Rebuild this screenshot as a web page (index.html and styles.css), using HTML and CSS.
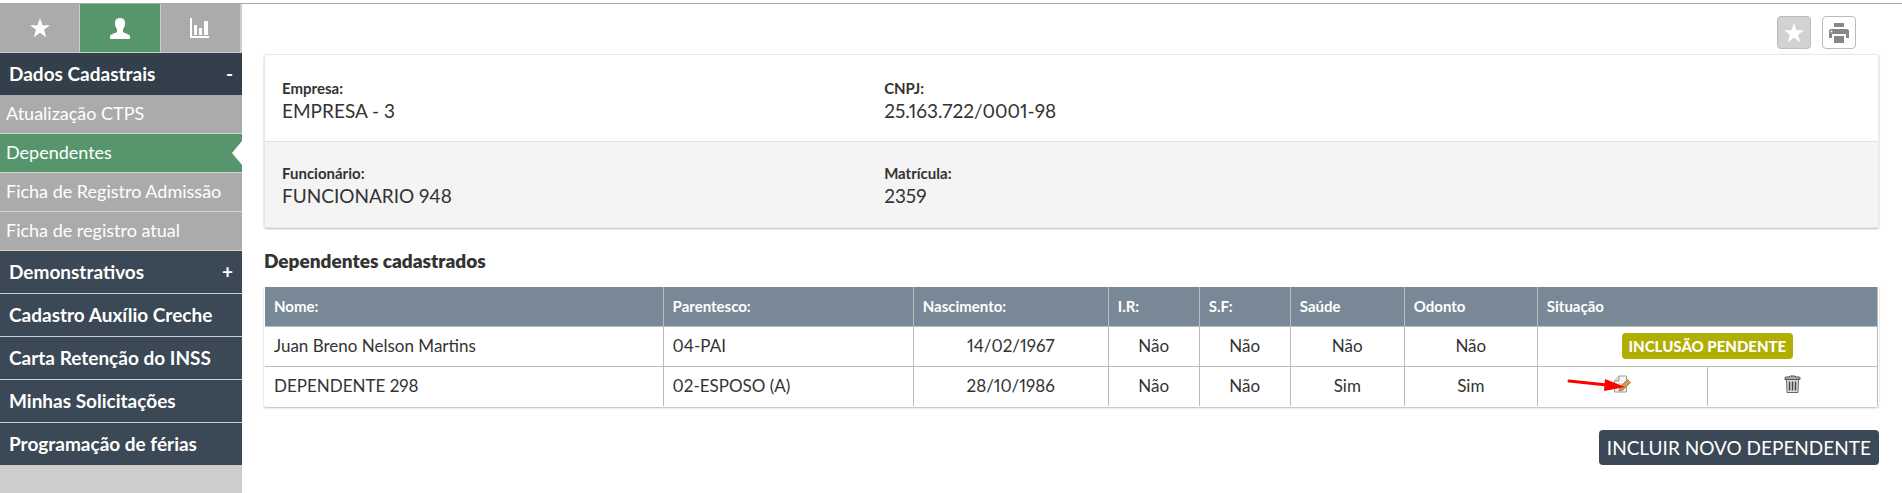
FILE: index.html
```html
<!DOCTYPE html>
<html lang="pt-BR">
<head>
<meta charset="utf-8">
<title>Dependentes</title>
<link rel="stylesheet" href="styles.css">
</head>
<body>
<div class="layout">
  <aside class="sidebar">
    <nav class="tabs" aria-label="Seções">
      <a class="tab" href="#" aria-label="Favoritos"><svg width="20" height="20" viewBox="0 0 20 20"><path fill="#fff" d="M10 0l2.500 7.200H20l-6 4.600 2.300 7.400L10 14.700l-6.300 4.500L6 11.800 0 7.200h7.500z"/></svg></a>
      <a class="tab tab-active" href="#" aria-label="Funcionário"><svg width="20" height="21" viewBox="0 0 20 21"><path fill="#fff" d="M5 5C5 1.500 7 0 10 0s5 1.500 5 5c0 3-1 4.500-2 6.500v2.300c0 1.200 7 2.200 7 4.700V21H0v-2.500c0-2.500 7-3.500 7-4.700v-2.300C6 9.500 5 8 5 5z"/></svg></a>
      <a class="tab" href="#" aria-label="Gráficos"><svg width="20" height="20" viewBox="0 0 20 20"><path fill="#fff" d="M0 0h2v18h17v2H0zM4 7h3v10H4zM9 10h3v7H9zM14 3h4v14h-4z"/></svg></a>
    </nav>
    <nav class="menu" aria-label="Menu">
      <a class="group group-open" href="#"><span>Dados Cadastrais</span><span>-</span></a>
      <a class="item" href="#">Atualização CTPS</a>
      <a class="item item-active" href="#">Dependentes</a>
      <a class="item" href="#">Ficha de Registro Admissão</a>
      <a class="item" href="#">Ficha de registro atual</a>
      <a class="group" href="#"><span>Demonstrativos</span><span>+</span></a>
      <a class="group" href="#">Cadastro Auxílio Creche</a>
      <a class="group" href="#">Carta Retenção do INSS</a>
      <a class="group" href="#">Minhas Solicitações</a>
      <a class="group" href="#">Programação de férias</a>
    </nav>
  </aside>
  <main class="content">
    <div class="toolbar">
      <button class="tool tool-star" type="button" aria-label="Favoritar"><svg width="20" height="20" viewBox="0 0 20 20"><path fill="#fff" d="M10 0l2.500 7.200H20l-6 4.600 2.300 7.400L10 14.700l-6.300 4.500L6 11.800 0 7.200h7.500z"/></svg></button>
      <button class="tool" type="button" aria-label="Imprimir"><svg width="20" height="20" viewBox="0 0 20 20"><path fill="#888" d="M5 0h10v4H5zM2 6h16q2 0 2 2v7h-3v-4H3v4H0V8q0-2 2-2zM5 13h10v7H5z"/><circle cx="2.500" cy="8.500" r="1" fill="#fff"/></svg></button>
    </div>
    <section class="panel">
      <dl class="info">
        <div><dt>Empresa:</dt><dd>EMPRESA - 3</dd></div>
        <div><dt>CNPJ:</dt><dd>25.163.722/0001-98</dd></div>
      </dl>
      <dl class="info info-alt">
        <div><dt>Funcionário:</dt><dd>FUNCIONARIO 948</dd></div>
        <div><dt>Matrícula:</dt><dd>2359</dd></div>
      </dl>
    </section>
    <h2 class="title">Dependentes cadastrados</h2>
    <div class="table-card">
      <table class="grid">
        <colgroup><col class="c-name"><col class="c-kin"><col class="c-birth"><col class="c-tax"><col class="c-tax"><col class="c-health"><col class="c-dental"><col class="c-action"><col class="c-action"></colgroup>
        <thead><tr><th>Nome:</th><th>Parentesco:</th><th>Nascimento:</th><th>I.R:</th><th>S.F:</th><th>Saúde</th><th>Odonto</th><th colspan="2">Situação</th></tr></thead>
        <tbody>
          <tr><td>Juan Breno Nelson Martins</td><td>04-PAI</td><td class="mid">14/02/1967</td><td class="mid">Não</td><td class="mid">Não</td><td class="mid">Não</td><td class="mid">Não</td><td class="mid" colspan="2"><span class="badge">INCLUSÃO PENDENTE</span></td></tr>
          <tr><td>DEPENDENTE 298</td><td>02-ESPOSO (A)</td><td class="mid">28/10/1986</td><td class="mid">Não</td><td class="mid">Não</td><td class="mid">Sim</td><td class="mid">Sim</td>
            <td class="mid"><button class="act" type="button" aria-label="Editar"><svg width="18" height="18" viewBox="0 0 18 18"><path fill="#f4f4f4" stroke="#999" d="M6 1h7.500v16H1.500V6z"/><path fill="#ddd" stroke="#999" d="M6 1v5H1.500"/><path stroke="#ccc" d="M4 9h6M4 12h4"/><path fill="#dc9a45" stroke="#8d7150" stroke-width=".8" d="M14.500 4.500l3 3-7.500 7.500-4 1 1-4z"/></svg><svg class="arrow" width="58" height="14" viewBox="0 0 58 14"><path fill="none" stroke="#f00" stroke-width="3" stroke-linecap="round" d="M2 3l38 4"/><path fill="#f00" d="M38 1l20 8-21 4z"/></svg></button></td>
            <td class="mid"><button class="act" type="button" aria-label="Excluir"><svg width="17" height="18" viewBox="0 0 17 18"><path fill="#ddd" stroke="#666" d="M2.500 4.500h12l-.5 13H3z"/><path fill="#aaa" stroke="#555" d="M1 4.500V3q0-1 1-1h3l1-1h5l1 1h3q1 0 1 1v1.500z"/><path stroke="#444" stroke-width="1.500" d="M5.500 6.500v9M8.500 6.500v9M11.500 6.500v9"/></svg></button></td></tr>
        </tbody>
      </table>
    </div>
    <div class="actions"><button class="primary" type="button">INCLUIR NOVO DEPENDENTE</button></div>
  </main>
</div>
</body>
</html>
```
FILE: styles.css
```css
* { box-sizing: border-box; }
body { margin: 0; padding-top: 3px; background: #fff; color: #333; font-family: Lato, "Open Sans", sans-serif; font-variant-numeric: proportional-nums; }
a { color: #fff; text-decoration: none; }
button { font-family: inherit; cursor: pointer; }
svg { display: block; }
.layout { display: flex; min-height: calc(100vh - 3px); border-top: 1px solid #aaa; }
.sidebar { flex: none; width: 242px; background: #cdcdcd; }
.tabs { display: grid; grid-template-columns: repeat(3, 1fr); gap: 1px; padding-right: 2px; }
.tab { display: flex; align-items: center; justify-content: center; height: 48px; background: #ababab; }
.tab-active { background: #57966c; }
.menu { padding-top: 1px; }
.group { display: flex; justify-content: space-between; padding: 0 9px; height: 43px; border-bottom: 1px solid #cdcdcd; background: #3b4856; font-size: 19px; line-height: 42px; font-weight: 700; }
.group-open { height: 42px; background: #333f4b; border-bottom: 0; }
.item { display: block; position: relative; height: 39px; padding: 0 6px; border-bottom: 1px solid #d3d3d3; background: #ababab; font-size: 18px; line-height: 37px; }
.item-active { background: #57966c; }
.item-active::after { content: ""; position: absolute; right: 0; top: 7px; border: solid transparent; border-width: 12px 10px 12px 0; border-right-color: #fff; }
.content { flex: 1; min-width: 0; padding: 12px 23px 16px 22px; }
.toolbar { display: flex; justify-content: flex-end; gap: 11px; padding-right: 23px; margin-bottom: 5px; }
.tool { display: flex; align-items: center; justify-content: center; width: 34px; height: 33px; padding: 0; border: 1px solid #bbb; border-radius: 4px; background: #fff; }
.tool-star { background: #d2d2d2; }
.panel { border: 1px solid #e8e8e8; border-radius: 3px; box-shadow: 0 1px 2px #bbb; overflow: hidden; }
.info { display: grid; grid-template-columns: 3fr 5fr; column-gap: 16px; margin: 0; padding: 22px 17px 17px; min-height: 86px; }
.info-alt { padding-top: 20px; background: #f4f4f4; border-top: 1px solid #e2e2e2; }
.info dt { font-size: 15px; line-height: 22px; font-weight: 700; }
.info dd { margin: 0; font-size: 19px; line-height: 24px; }
.title { margin: 21px 0 13px; font-size: 19px; line-height: 24px; font-weight: 800; }
.table-card { padding: 1px; border-radius: 2px; box-shadow: 0 1px 2px #bbb; }
.grid { width: 100%; table-layout: fixed; border-collapse: collapse; font-size: 17px; }
.grid th, .grid td { padding: 0 9px; height: 40px; border: solid #bbb; border-width: 0 1px 1px 0; text-align: left; line-height: 22px; }
.grid th { height: 39px; background: #798896; color: #fff; font-size: 15px; }
.grid tbody tr:last-child td { border-bottom: 0; }
.grid .mid { text-align: center; }
.c-name { width: 398px; }
.c-kin { width: 250px; }
.c-birth { width: 195px; }
.c-tax { width: 91px; }
.c-health { width: 114px; }
.c-dental { width: 133px; }
.c-action { width: 170px; }
.badge { display: inline-block; padding: 0 7px; border-radius: 4px; background: #b0ae00; color: #fff; font-size: 15px; line-height: 26px; font-weight: 900; }
.act { position: relative; display: inline-block; padding: 0; border: 0; background: none; vertical-align: middle; margin-bottom: 5px; }
.arrow { position: absolute; right: 6px; top: 3px; }
.actions { display: flex; justify-content: flex-end; margin-top: 23px; }
.primary { padding: 0 8px; border: 0; border-radius: 4px; background: #3b4856; color: #fff; font-size: 19px; line-height: 35px; }
```
